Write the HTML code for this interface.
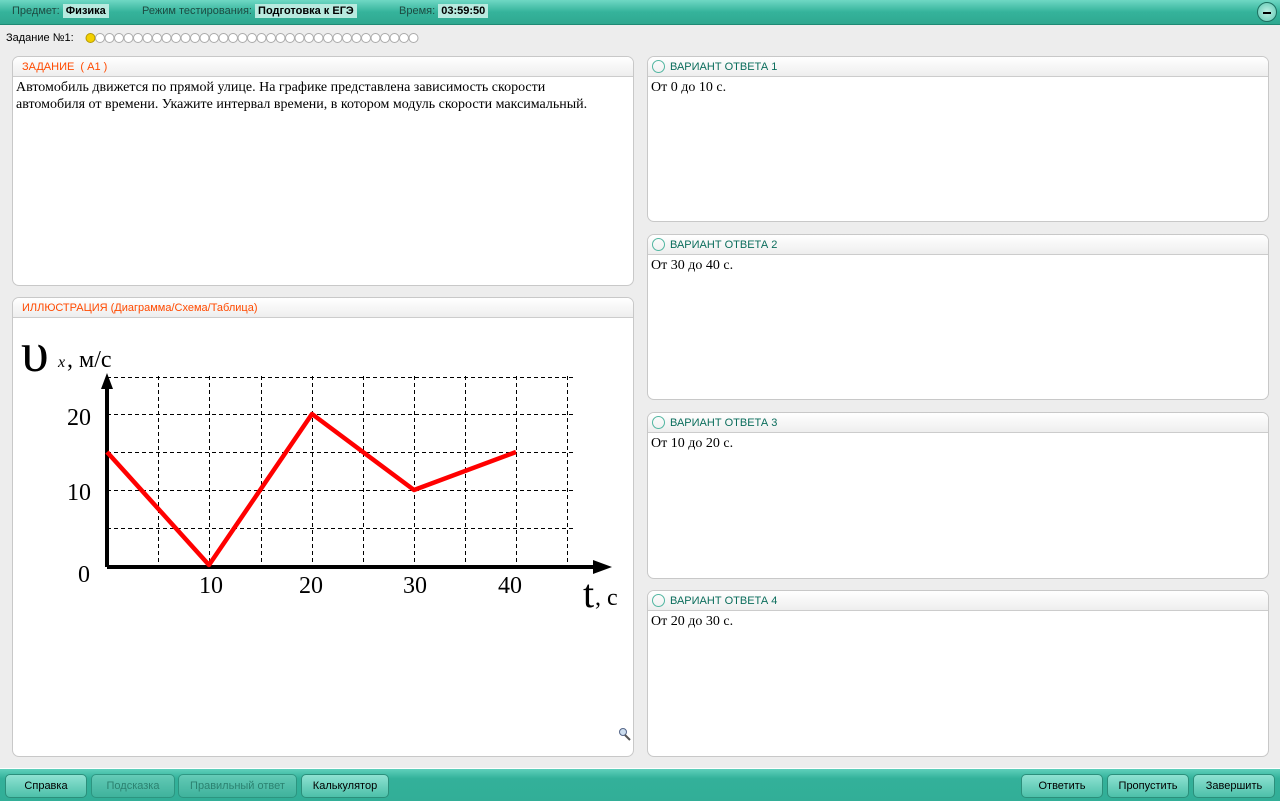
<!DOCTYPE html>
<html><head><meta charset="utf-8"><style>
body{margin:0;width:1280px;height:800px;background:#ededed;font-family:"Liberation Sans",sans-serif;position:relative;overflow:hidden}
.top{position:absolute;left:0;top:0;width:1280px;height:24px;background:linear-gradient(#6fd8c4,#35b39b 50%,#2fa890);border-bottom:1px solid #1e8a74;font-size:11px;color:#1d4b42}
.top span{position:absolute;top:5px}
.top b{font-weight:bold;color:#000;background:#b8eadf;padding:1px 3px}
.bot{position:absolute;left:0;top:768px;width:1280px;height:32px;background:linear-gradient(#5fd0bb,#33b19a 30%,#32ae97);border-top:1px solid #fff}
.btn{position:absolute;top:5px;height:22px;border-radius:5px;background:linear-gradient(#8fe2d2,#4cc0a9);border:1px solid #2b8f7b;font-size:11px;line-height:22px;text-align:center;color:#000}
.btn.d{color:#2a7666;background:linear-gradient(#6fd0bd,#43b49e);opacity:.8}
.p{position:absolute;background:#fff;border:1px solid #c8c8c8;border-radius:7px;overflow:hidden}
.h{height:19px;border-bottom:1px solid #ccc;background:linear-gradient(#fff,#eee);font-size:11px;line-height:20px;padding-left:9px;color:#ff4a00}
.g .h{color:#0b6d5c;padding-left:4px}
.g .h i{display:inline-block;width:11px;height:11px;border:1px solid #52b6a1;border-radius:50%;vertical-align:-3px;margin-right:5px}
.t{font-family:"Liberation Serif",serif;font-size:14px;padding:2px 3px;line-height:17px}
</style></head><body>
<div class="top"><span style="left:12px">Предмет: <b>Физика</b></span><span style="left:142px">Режим тестирования: <b>Подготовка к ЕГЭ</b></span><span style="left:399px">Время: <b>03:59:50</b></span>
<div style="position:absolute;right:3px;top:2px;width:18px;height:18px;border-radius:50%;border:1px solid #1d6f60;background:radial-gradient(#bff0e4,#5cc8b2)"><div style="position:absolute;left:5px;top:9px;width:8px;height:2px;background:#000"></div></div></div>
<div style="position:absolute;left:6px;top:32px;font-size:11px">Задание №1:</div>
<svg style="position:absolute;left:85px;top:32px" width="340" height="12">
<circle cx="5.5" cy="6" r="4.5" fill="#f3d000" stroke="#b59a00"/>
<g fill="#fff" stroke="#aaa">
<circle cx="15" cy="6" r="4.5"/><circle cx="24.5" cy="6" r="4.5"/><circle cx="34" cy="6" r="4.5"/><circle cx="43.5" cy="6" r="4.5"/><circle cx="53" cy="6" r="4.5"/><circle cx="62.5" cy="6" r="4.5"/><circle cx="72" cy="6" r="4.5"/><circle cx="81.5" cy="6" r="4.5"/><circle cx="91" cy="6" r="4.5"/><circle cx="100.5" cy="6" r="4.5"/><circle cx="110" cy="6" r="4.5"/><circle cx="119.5" cy="6" r="4.5"/><circle cx="129" cy="6" r="4.5"/><circle cx="138.5" cy="6" r="4.5"/><circle cx="148" cy="6" r="4.5"/><circle cx="157.5" cy="6" r="4.5"/><circle cx="167" cy="6" r="4.5"/><circle cx="176.5" cy="6" r="4.5"/><circle cx="186" cy="6" r="4.5"/><circle cx="195.5" cy="6" r="4.5"/><circle cx="205" cy="6" r="4.5"/><circle cx="214.5" cy="6" r="4.5"/><circle cx="224" cy="6" r="4.5"/><circle cx="233.5" cy="6" r="4.5"/><circle cx="243" cy="6" r="4.5"/><circle cx="252.5" cy="6" r="4.5"/><circle cx="262" cy="6" r="4.5"/><circle cx="271.5" cy="6" r="4.5"/><circle cx="281" cy="6" r="4.5"/><circle cx="290.5" cy="6" r="4.5"/><circle cx="300" cy="6" r="4.5"/><circle cx="309.5" cy="6" r="4.5"/><circle cx="319" cy="6" r="4.5"/><circle cx="328.5" cy="6" r="4.5"/></g></svg>

<div class="p" style="left:12px;top:56px;width:620px;height:228px"><div class="h">ЗАДАНИЕ &nbsp;( А1 )</div><div class="t" style="width:600px">Автомобиль движется по прямой улице. На графике представлена зависимость скорости<br>автомобиля от времени. Укажите интервал времени, в котором модуль скорости максимальный.</div></div>
<div class="p" style="left:12px;top:297px;width:620px;height:458px"><div class="h">ИЛЛЮСТРАЦИЯ (Диаграмма/Схема/Таблица)</div>
<svg style="position:absolute;left:-12px;top:-297px" width="640" height="760" font-family="Liberation Serif,serif">
<g stroke="#000" stroke-dasharray="4,3" stroke-width="1">
<path d="M157.5 375V566M208.5 375V566M260.5 375V566M311.5 375V566M362.5 375V566M413.5 375V566M464.5 375V566M515.5 375V566M566.5 375V566M106 376.5H575M106 413.5H575M106 451.5H575M106 489.5H575M106 527.5H575"/></g>
<path d="M106 566V378M106 566H596" stroke="#000" stroke-width="4"/>
<path d="M100 388L106 372L112 388Z M592 559L611 566L592 573Z"/>
<polyline points="106,451 208,564 311,413 413,489 515,451" fill="none" stroke="#f00" stroke-width="4.5" stroke-linejoin="round"/>
<g font-size="24"><text x="66" y="424">20</text><text x="66" y="499">10</text><text x="77" y="581">0</text><text x="198" y="592">10</text><text x="298" y="592">20</text><text x="402" y="592">30</text><text x="497" y="592">40</text></g>
<text x="20" y="370" font-size="56">υ</text><text x="57" y="366" font-size="16" font-style="italic">x</text><text x="66" y="366" font-size="24">, м/с</text>
<text x="582" y="606" font-size="40">t</text><text x="594" y="604" font-size="24">, с</text>
<circle cx="622" cy="731" r="3.5" fill="#cde" stroke="#568"/><path d="M624 734L629 739" stroke="#555" stroke-width="2"/>
</svg></div>

<div class="p g" style="left:647px;top:56px;width:620px;height:164px"><div class="h"><i></i>ВАРИАНТ ОТВЕТА 1</div><div class="t">От 0 до 10 с.</div></div>
<div class="p g" style="left:647px;top:234px;width:620px;height:164px"><div class="h"><i></i>ВАРИАНТ ОТВЕТА 2</div><div class="t">От 30 до 40 с.</div></div>
<div class="p g" style="left:647px;top:412px;width:620px;height:165px"><div class="h"><i></i>ВАРИАНТ ОТВЕТА 3</div><div class="t">От 10 до 20 с.</div></div>
<div class="p g" style="left:647px;top:590px;width:620px;height:165px"><div class="h"><i></i>ВАРИАНТ ОТВЕТА 4</div><div class="t">От 20 до 30 с.</div></div>

<div class="bot">
<div class="btn" style="left:5px;width:80px">Справка</div>
<div class="btn d" style="left:91px;width:82px">Подсказка</div>
<div class="btn d" style="left:178px;width:117px">Правильный ответ</div>
<div class="btn" style="left:301px;width:86px">Калькулятор</div>
<div class="btn" style="left:1021px;width:80px">Ответить</div>
<div class="btn" style="left:1107px;width:80px">Пропустить</div>
<div class="btn" style="left:1193px;width:80px">Завершить</div>
</div>
</body></html>
